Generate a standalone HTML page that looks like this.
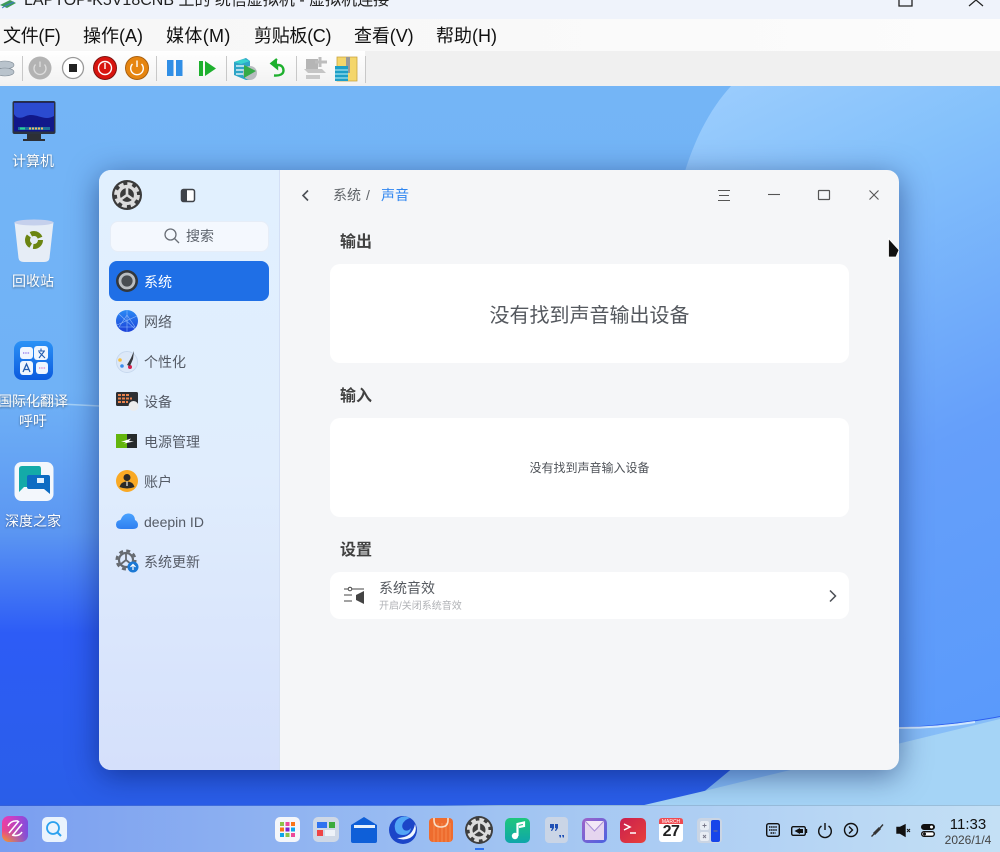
<!DOCTYPE html>
<html lang="zh"><head><meta charset="utf-8"><title>声音</title>
<style>
html,body{margin:0;padding:0;width:1000px;height:852px;overflow:hidden}
body{position:relative;font-family:"Liberation Sans","Noto Sans CJK SC",sans-serif;background:#5a9af5}
.a{position:absolute;white-space:nowrap}
svg{position:absolute;overflow:hidden}
.m{top:24px;font-size:18px;line-height:24px;color:#111}
.d{color:#fff;font-size:14px;line-height:20px;width:90px;left:-12px;text-align:center;text-shadow:0 1px 2px rgba(0,0,0,.45)}
.s{left:144px;font-size:14px;line-height:20px;color:#555b66}
.h{left:340px;font-size:16px;line-height:20px;font-weight:700;color:#414141}
.c{position:absolute;left:330px;width:519px;background:#fff;border-radius:10px}
</style></head><body>

<!-- wallpaper -->
<svg style="left:0;top:86px" width="1000" height="720" viewBox="0 86 1000 720">
<defs>
<linearGradient id="w" x1="0" y1="0" x2="0" y2="1"><stop offset="0" stop-color="#74b5f6"/><stop offset=".42" stop-color="#70b2f6"/><stop offset=".62" stop-color="#5b96f2"/><stop offset=".76" stop-color="#2d5cf6"/><stop offset="1" stop-color="#2a5ee8"/></linearGradient>
<linearGradient id="w2" gradientUnits="userSpaceOnUse" x1="700" y1="100" x2="1000" y2="720"><stop offset="0" stop-color="#9accfd"/><stop offset=".2" stop-color="#84c1fb"/><stop offset=".6" stop-color="#659ffa"/><stop offset="1" stop-color="#5a9afb"/></linearGradient>
</defs>
<rect x="0" y="86" width="1000" height="720" fill="url(#w)"/>
<path d="M731 86C700 120 680 170 670 240C660 400 680 640 899 727C930 726 970 722 1000 716V86Z" fill="url(#w2)"/>
<path d="M0 401L100 406" stroke="#a6d2f8" stroke-width="1.500" fill="none"/>
<path d="M780 729L899 728C930 727 970 723 1000 717V722L700 795Z" fill="#86bdf8"/>
<path d="M899 728C925 728 950 726 975 722" stroke="#cfe7fc" stroke-width="2" fill="none"/>
<path d="M640 806L700 792L1000 719V806Z" fill="#a5d4f6"/>
</svg>

<!-- host chrome -->
<div class="a" style="left:0;top:0;width:1000px;height:19px;background:#eff3fb;overflow:hidden">
 <div class="a" style="left:24px;top:-9px;font-size:16px;line-height:20px;color:#222">LAPTOP-K5V18CNB 上的 统信虚拟机 - 虚拟机连接</div>
 <svg style="left:0;top:0" width="18" height="10"><path d="M0 5L10 0L16 3L7 8Z" fill="#3d9a5a"/><path d="M2 8L7 5L14 2" stroke="#3f78c8" fill="none"/></svg>
 <svg style="left:895px;top:0" width="20" height="8"><path d="M4 0V6H17V0" fill="none" stroke="#222" stroke-width="1.300"/></svg>
 <svg style="left:965px;top:0" width="24" height="8"><path d="M4 6L11 0L18 6" fill="none" stroke="#222" stroke-width="1.200"/></svg>
</div>
<div class="a" style="left:0;top:19px;width:1000px;height:32px;background:linear-gradient(90deg,#f6f6f6,#fcfcfc)"></div>
<div class="a m" style="left:3px;letter-spacing:-.3px">文件(F)</div>
<div class="a m" style="left:83px">操作(A)</div>
<div class="a m" style="left:166px;letter-spacing:.35px">媒体(M)</div>
<div class="a m" style="left:254px;letter-spacing:-.3px">剪贴板(C)</div>
<div class="a m" style="left:354px;letter-spacing:-.1px">查看(V)</div>
<div class="a m" style="left:436px">帮助(H)</div>
<div class="a" style="left:0;top:51px;width:1000px;height:35px;background:#f0f0f0"></div>
<div class="a" style="left:0;top:51px;width:365px;height:33px;background:linear-gradient(#fff,#f2f2f2)"></div>
<svg style="left:0;top:51px" width="370" height="35">
 <g fill="#b9c3cc" stroke="#7f8a94" stroke-width=".6"><ellipse cx="5" cy="14" rx="9" ry="4"/><ellipse cx="5" cy="21" rx="9" ry="4"/></g>
 <g stroke="#c8c8c8"><path d="M22.500 5V30M156.500 5V30M226.500 5V30M296.500 5V30M365.500 5V32"/></g>
 <circle cx="40" cy="17" r="11.500" fill="#b3b3b3"/><path d="M35.500 13.500A6 6 0 1 0 44.500 13.500M40 10.500V16" stroke="#ddd" stroke-width="1.300" fill="none"/>
 <circle cx="73" cy="17" r="10.500" fill="#fff" stroke="#999" stroke-width="1.300"/><rect x="69" y="13" width="8" height="8" fill="#222"/>
 <circle cx="105" cy="17" r="11.500" fill="#d8140f" stroke="#7d1310"/><circle cx="105" cy="17" r="6.500" fill="none" stroke="#fff" stroke-width="1.400"/><path d="M105 12V18" stroke="#fff" stroke-width="1.400"/>
 <circle cx="137" cy="17" r="11.500" fill="#e68510" stroke="#a96010"/><path d="M132.500 13A6.300 6.300 0 1 0 141.500 13M137 9.500V16" stroke="#fff" stroke-width="1.400" fill="none"/>
 <rect x="167" y="9" width="6.500" height="16" fill="#318fe6"/><rect x="176" y="9" width="6.500" height="16" fill="#318fe6"/>
 <rect x="199" y="10" width="4" height="15" fill="#1eb02e"/><path d="M205 10L216 17.500L205 25Z" fill="#1eb02e"/>
 <path d="M234 11L246 7L250 10V29L246 29L234 24Z" fill="#2fa5c7"/><path d="M234 11L244 8L250 10L241 13Z" fill="#39d2cf"/><path d="M236 15H245M236 19H245M236 23H245" stroke="#fff" stroke-width="1.200"/><circle cx="250" cy="22" r="7" fill="#b8bcc0"/><path d="M244 14L256 20L244 27Z" fill="#35ab47"/>
 <path d="M277 8L271.500 12.500L277 17V14C282 13.500 283.500 17 283.500 19.500C283.500 23 280 25 274 24.500" fill="#1eb02e" stroke="#1eb02e" stroke-width="2.400" fill-opacity="0"/><path d="M277 8L271.500 12.500L277 17Z" fill="#1eb02e"/>
 <path d="M306 8H318V18H306Z" fill="#b5b5b5"/><path d="M304 18H322L326 22H308Z" fill="#c5c5c5"/><path d="M320 6V16M315 11H327" stroke="#bdbdbd" stroke-width="3"/><rect x="306" y="24" width="14" height="4" fill="#c9c9c9"/>
 <path d="M337 6H357V30H337Z" fill="#f4d66b" stroke="#c8a33f" stroke-width=".8"/><rect x="346" y="6" width="4" height="16" fill="#999"/><rect x="335" y="15" width="13" height="15" fill="#1d9fc7"/><path d="M335 19H348M335 23H348M335 27H348" stroke="#bff0f7"/>
</svg>

<!-- desktop icons -->
<svg style="left:10px;top:98px" width="48" height="48">
 <rect x="2.500" y="3" width="43" height="33" rx="2" fill="#2b3240"/><rect x="4" y="4.500" width="40" height="29" fill="#11188a"/><path d="M4 5H44V18C34 24 26 14 16 18C10 21 6 20 4 16Z" fill="#2b4bd0"/><rect x="8" y="29" width="32" height="3" fill="#1b6f9a"/><path d="M10 30.500H15" stroke="#2cd29b" stroke-width="2"/><path d="M19 30.500H34" stroke="#f3b56b" stroke-width="2" stroke-dasharray="2 1"/>
 <rect x="17" y="36" width="14" height="5" fill="#2c2f35"/><rect x="13" y="41" width="22" height="2" fill="#2c2f35"/>
</svg>
<svg style="left:10px;top:216px" width="48" height="48">
 <path d="M4.500 6H43.500L39.500 42Q39 46 34 46H14Q9 46 8.500 42Z" fill="#e6edf6"/><ellipse cx="24" cy="6.500" rx="19.500" ry="3" fill="#c5d0ec"/>
 <circle cx="24" cy="24" r="6.500" fill="none" stroke="#6b8512" stroke-width="5" stroke-dasharray="11 2.600"/>
</svg>
<svg style="left:10px;top:338px" width="48" height="48">
 <defs><linearGradient id="tr" x1="0" y1="0" x2="0" y2="1"><stop offset="0" stop-color="#2b92f6"/><stop offset="1" stop-color="#0b5ade"/></linearGradient></defs>
 <rect x="4" y="3" width="39" height="39" rx="8" fill="url(#tr)"/><rect x="10" y="9" width="13" height="12" rx="3" fill="#f0f6ff"/><rect x="24" y="8" width="14" height="14" rx="3" fill="#f0f6ff"/><rect x="10" y="23" width="13" height="14" rx="3" fill="#f0f6ff"/><rect x="26" y="24" width="12" height="12" rx="3" fill="#f0f6ff"/>
 <path d="M28 13H35M31 10.500V13M29 20L34 13.500M29 14L35 20" stroke="#225cb0" stroke-width="1.100" fill="none"/><path d="M13 34L16.500 26L20 34M14.500 31.500H18.500" stroke="#225cb0" stroke-width="1.300" fill="none"/><path d="M13 15H20" stroke="#8a6ee8" stroke-width="1.300" stroke-dasharray="1.300 1"/><path d="M29 30H36" stroke="#e07bc8" stroke-width="1.300" stroke-dasharray="1.300 1"/>
</svg>
<svg style="left:10px;top:458px" width="48" height="48">
 <rect x="4.500" y="4" width="39" height="39" rx="7" fill="#f3f7fc"/><path d="M9 11Q9 8 12 8H29Q31 8 31 11V27Q31 29 29 29H14L9 34Z" fill="#14aaa8"/><path d="M17 19Q17 17 19 17H38Q40 17 40 19V36L34 31H19Q17 31 17 29Z" fill="#0d6cc3"/><rect x="27" y="20" width="7" height="5" fill="#dff0ff"/>
</svg>
<div class="a d" style="top:151px">计算机</div>
<div class="a d" style="top:271px">回收站</div>
<div class="a d" style="top:391px">国际化翻译</div>
<div class="a d" style="top:411px">呼吁</div>
<div class="a d" style="top:511px">深度之家</div>

<!-- window -->
<div class="a" style="left:99px;top:170px;width:800px;height:600px;border-radius:12px;background:#f5f6f8;box-shadow:0 6px 30px rgba(0,20,80,.5);overflow:hidden">
 <div class="a" style="left:0;top:0;width:180px;height:600px;background:linear-gradient(#e1f0fe,#e0edfd 50%,#d5e0fb);border-right:1px solid #d3dff5"></div>
</div>

<!-- sidebar -->
<svg style="left:110px;top:178px" width="34" height="34" viewBox="0 0 34 34">
 <circle cx="17" cy="17" r="15" fill="#3b3b3b"/><circle cx="17" cy="17" r="8.500" fill="none" stroke="#dcdcdc" stroke-width="3.200"/><circle cx="17" cy="17" r="11.300" fill="none" stroke="#dcdcdc" stroke-width="3.200" stroke-dasharray="5 3.875"/><path d="M17 17V9M17 17L10 22M17 17L24 22" stroke="#dcdcdc" stroke-width="2.600"/>
</svg>
<svg style="left:180px;top:188px" width="16" height="15"><rect x="1.500" y="1.500" width="13" height="12" rx="2" fill="#fff" stroke="#3f4349" stroke-width="1.500"/><path d="M2 2H7V13H2Z" fill="#3f4349"/></svg>
<div class="a" style="left:110px;top:221px;width:157px;height:29px;border:1px solid #e6edf7;border-radius:8px;background:#f4f8fe"></div>
<svg style="left:163px;top:227px" width="18" height="18"><circle cx="7.500" cy="7.500" r="5.500" fill="none" stroke="#6a6f77" stroke-width="1.300"/><path d="M11.500 11.500L16 16" stroke="#6a6f77" stroke-width="1.300"/></svg>
<div class="a" style="left:186px;top:226px;font-size:14px;line-height:20px;color:#5d636c">搜索</div>
<div class="a" style="left:109px;top:261px;width:160px;height:40px;border-radius:8px;background:#1f6fe6"></div>

<svg style="left:115px;top:269px" width="24" height="24"><circle cx="12" cy="12" r="11" fill="#33373c"/><circle cx="12" cy="12" r="7" fill="#494d52" stroke="#b9bdc2" stroke-width="2.800"/></svg>
<svg style="left:115px;top:309px" width="24" height="24"><defs><linearGradient id="nt" x1="0" y1="0" x2="0" y2="1"><stop offset="0" stop-color="#2b8af5"/><stop offset="1" stop-color="#1b3fd8"/></linearGradient></defs><circle cx="12" cy="12" r="11" fill="url(#nt)"/><path d="M12 1V23M2 16L22 7M4 5L20 20M12 6L4 18L20 18Z" stroke="#8db8f9" stroke-width=".6" fill="none"/></svg>
<svg style="left:115px;top:349px" width="24" height="24"><circle cx="12" cy="13" r="10.500" fill="#dce8f8" stroke="#c7d8ee"/><circle cx="5" cy="11" r="1.800" fill="#f5c044"/><circle cx="7" cy="17" r="1.800" fill="#3a8dec"/><circle cx="15" cy="18" r="2" fill="#d8224f"/><path d="M19 2L16 9L12 16L15 17L18 10Z" fill="#37393e"/></svg>
<svg style="left:115px;top:389px" width="24" height="24"><rect x="1" y="3" width="22" height="14" rx="1.500" fill="#2d2f33"/><path d="M3 6H15M3 9.500H17M3 13H13" stroke="#e8824d" stroke-width="2" stroke-dasharray="3 1"/><circle cx="18.500" cy="17" r="5" fill="#ececec"/></svg>
<svg style="left:115px;top:429px" width="24" height="24"><rect x="1" y="5" width="11" height="14" fill="#63b50d"/><rect x="12" y="5" width="10" height="14" fill="#262a2b"/><path d="M6 13L16 9.500L14 12L19 12.500L9 14.500L11 13Z" fill="#fff"/></svg>
<svg style="left:115px;top:469px" width="24" height="24"><circle cx="12" cy="12" r="11" fill="#f9a925"/><circle cx="12" cy="8.500" r="3.500" fill="#2c2a28"/><path d="M4.500 18Q6 12.500 12 12.500Q18 12.500 19.500 18Q12 21 4.500 18Z" fill="#2c2a28"/><path d="M12 12.500V17" stroke="#eee" stroke-width="1.200"/></svg>
<svg style="left:115px;top:509px" width="24" height="24"><defs><linearGradient id="cl" x1="0" y1="0" x2="0" y2="1"><stop offset="0" stop-color="#4aa2ff"/><stop offset="1" stop-color="#2f7ff0"/></linearGradient></defs><path d="M6 20Q1 20 1 15.500Q1 11.500 5.500 11Q8 4 14 4.500Q19.500 5 20 11Q23 12.500 23 16Q23 20 18 20Z" fill="url(#cl)"/></svg>
<svg style="left:115px;top:549px" width="24" height="24"><circle cx="11" cy="11" r="7" fill="none" stroke="#666a70" stroke-width="2.200"/><circle cx="11" cy="11" r="9.300" fill="none" stroke="#666a70" stroke-width="2.500" stroke-dasharray="4 3.300"/><path d="M11 11V5M11 11L6 15M11 11L16 15" stroke="#666a70" stroke-width="1.800"/><circle cx="18" cy="18" r="5.500" fill="#1b78d4"/><path d="M18 21V16M15.500 18L18 15.500L20.500 18" stroke="#fff" stroke-width="1.200" fill="none"/></svg>

<div class="a s" style="top:272px;color:#fff">系统</div>
<div class="a s" style="top:312px">网络</div>
<div class="a s" style="top:352px">个性化</div>
<div class="a s" style="top:392px">设备</div>
<div class="a s" style="top:432px">电源管理</div>
<div class="a s" style="top:472px">账户</div>
<div class="a s" style="top:512px">deepin ID</div>
<div class="a s" style="top:552px">系统更新</div>

<!-- header -->
<svg style="left:300px;top:189px" width="12" height="13"><path d="M8 1.500L3 6.500L8 11.500" fill="none" stroke="#4b4f55" stroke-width="1.600"/></svg>
<div class="a" style="left:333px;top:186px;font-size:14px;line-height:18px;color:#5f6368">系统</div>
<div class="a" style="left:366px;top:186px;font-size:14px;line-height:18px;color:#5f6368">/</div>
<div class="a" style="left:381px;top:186px;font-size:14px;line-height:18px;color:#2f86f0">声音</div>
<svg style="left:710px;top:180px" width="180" height="30" fill="none" stroke="#555" stroke-width="1.100">
 <path d="M8 10.500H20M9 15.500H19M8 20.500H20"/><path d="M58 14.500H70"/><rect x="108.500" y="10.500" width="11" height="9" rx=".5" stroke-width="1.200"/><path d="M159.500 10.500L168.500 19.500M168.500 10.500L159.500 19.500"/>
</svg>

<!-- content -->
<div class="a h" style="top:233px">输出</div>
<div class="c" style="top:264px;height:99px"></div>
<div class="a" style="left:330px;width:519px;top:302px;text-align:center;font-size:20px;line-height:28px;color:#54585e">没有找到声音输出设备</div>
<div class="a h" style="top:387px">输入</div>
<div class="c" style="top:418px;height:99px"></div>
<div class="a" style="left:330px;width:519px;top:460px;text-align:center;font-size:12px;line-height:17px;color:#4f5359">没有找到声音输入设备</div>
<div class="a h" style="top:541px">设置</div>
<div class="c" style="top:572px;height:47px"></div>
<svg style="left:342px;top:586px" width="24" height="20"><path d="M2 3H6M10 3H22M2 9H10M2 15H10" stroke="#444" stroke-width="1.100" fill="none"/><circle cx="8" cy="3" r="1.800" fill="#fff" stroke="#444"/><path d="M14 9L22 5V18L14 14Z" fill="#444"/></svg>
<div class="a" style="left:379px;top:578px;font-size:14px;line-height:20px;color:#55595f">系统音效</div>
<div class="a" style="left:379px;top:600px;font-size:10px;line-height:14px;color:#b0b2b6">开启/关闭系统音效</div>
<svg style="left:827px;top:589px" width="12" height="14"><path d="M3 1.500L8.500 7L3 12.500" fill="none" stroke="#4b4f55" stroke-width="1.500"/></svg>

<!-- cursor -->
<svg style="left:886px;top:236px" width="16" height="23"><path d="M2.500 2.500L13 14L10 21H2.500Z" fill="#111" stroke="#fff" stroke-width=".8"/></svg>

<!-- dock -->
<div class="a" style="left:0;top:806px;width:1000px;height:46px;background:linear-gradient(90deg,#7a9ef0,#a0c3f2 50%,#c4e0f5)"></div>
<div class="a" style="left:0;top:805px;width:1000px;height:1px;background:linear-gradient(90deg,#3460d8,#4a7ae0 44%,#8fb3d8 50%,#9cc0da)"></div>
<svg style="left:0;top:805px" width="1000" height="47">
 <defs>
 <linearGradient id="g1" x1="0" y1="0" x2="0" y2="1"><stop offset="0" stop-color="#e93ab8"/><stop offset=".55" stop-color="#ef4488"/><stop offset="1" stop-color="#f9a01c"/></linearGradient>
 <linearGradient id="g2" x1="0" y1="0" x2="1" y2="0"><stop offset="0" stop-color="#a040e0" stop-opacity="0"/><stop offset="1" stop-color="#7a4fe0"/></linearGradient>
 <linearGradient id="g3" x1="0" y1="0" x2="0" y2="1"><stop offset="0" stop-color="#1fc77c"/><stop offset="1" stop-color="#0fa6aa"/></linearGradient>
 <linearGradient id="g4" x1="0" y1="0" x2="1" y2="1"><stop offset="0" stop-color="#a063c8"/><stop offset="1" stop-color="#4a62e0"/></linearGradient>
 <linearGradient id="g5" x1="0" y1="0" x2="1" y2="1"><stop offset="0" stop-color="#c91f4f"/><stop offset="1" stop-color="#e8403a"/></linearGradient>
 </defs>
 <rect x="2" y="11" width="26" height="26" rx="7" fill="url(#g1)"/><rect x="2" y="11" width="26" height="26" rx="7" fill="url(#g2)"/><path d="M9 28L19 16M13 30L22 19M8 21Q11 15 18 16M22 27Q19 32 12 30" stroke="#fff" stroke-width="1.500" fill="none"/>
 <rect x="42" y="12" width="25" height="25" rx="5" fill="#eaf3fd"/><circle cx="53" cy="23" r="6" fill="none" stroke="#2ba1ef" stroke-width="1.800"/><path d="M57 27L61 31" stroke="#2ba1ef" stroke-width="2"/>
 <rect x="275" y="12" width="25" height="25" rx="5" fill="#f4f6fa"/>
 <rect x="280" y="17" width="4" height="4" fill="#8bc34a"/><rect x="285.500" y="17" width="4" height="4" fill="#ec4899"/><rect x="291" y="17" width="4" height="4" fill="#f97316"/><rect x="280" y="22.500" width="4" height="4" fill="#f97316"/><rect x="285.500" y="22.500" width="4" height="4" fill="#7e22ce"/><rect x="291" y="22.500" width="4" height="4" fill="#0ea5e9"/><rect x="280" y="28" width="4" height="4" fill="#0ea5e9"/><rect x="285.500" y="28" width="4" height="4" fill="#8bc34a"/><rect x="291" y="28" width="4" height="4" fill="#ec4899"/>
 <rect x="313" y="12" width="26" height="25" rx="5" fill="#cfd8e6"/><rect x="317" y="17" width="10" height="6" fill="#2f72f0"/><rect x="329" y="17" width="6" height="6" fill="#3cab3c"/><rect x="317" y="25" width="6" height="6" fill="#ef4444"/><rect x="325" y="25" width="10" height="6" fill="#eef2f8"/>
 <path d="M351 20L364 12L377 20V36Q377 38 375 38H353Q351 38 351 36Z" fill="#0e5fd8"/><rect x="354" y="20" width="21" height="3" fill="#e6f0fb"/>
 <circle cx="403" cy="25" r="14" fill="#1c46c8"/><path d="M410 13A10 10 0 0 0 395 24Q396 30 403 30Q410 30 411 23Q408 27 404 25Q401 22 403 18Q406 14 410 13Z" fill="#52a6f6"/><path d="M415 19Q418 28 410 33Q403 36 397 33Q405 33 410 29Q414 25 415 19Z" fill="#f2f8ff"/>
 <rect x="429" y="13" width="24" height="24" rx="4" fill="#ee6c2e"/><path d="M434 18V37M438 18V37M442 18V37M446 18V37M450 18V37" stroke="#f58a4f" stroke-width="1"/><path d="M434 13V15Q434 22 441 22Q448 22 448 15V13" fill="none" stroke="#f8dfc8" stroke-width="1.600"/>
 <circle cx="479" cy="25" r="14" fill="#3e3e3e"/><circle cx="479" cy="25" r="8" fill="none" stroke="#dcdcdc" stroke-width="3"/><circle cx="479" cy="25" r="10.600" fill="none" stroke="#dcdcdc" stroke-width="3" stroke-dasharray="4.700 3.630"/><path d="M479 25V17M479 25L472 30M479 25L486 30" stroke="#dcdcdc" stroke-width="2.300"/>
 <rect x="475" y="43" width="9" height="2" fill="#2e72ef"/>
 <rect x="505" y="13" width="25" height="25" rx="5" fill="url(#g3)"/><path d="M517.500 31V19L524 17.500V21L519 22" fill="none" stroke="#fff" stroke-width="2.200"/><circle cx="515" cy="31" r="3.200" fill="#fff"/>
 <rect x="545" y="12" width="23" height="26" rx="4" fill="#cad5e6"/><path d="M550 19H554V23L552 26H551L552 23H550ZM555 19H558V23L556 26H555L556 23H555Z" fill="#1e4fb5"/><path d="M559 30H561V32L560 33ZM562 30H564V32L563 33Z" fill="#1e4fb5"/>
 <rect x="582" y="13" width="25" height="25" rx="5" fill="url(#g4)"/><rect x="585" y="16" width="19" height="19" fill="#e5d5ef"/><path d="M585 16L594.500 26L604 16" fill="#f3e9f7" stroke="#a98fd7"/>
 <rect x="620" y="13" width="26" height="25" rx="5" fill="url(#g5)"/><path d="M624 19L630 22L624 25" stroke="#fff" stroke-width="1.500" fill="none"/><path d="M630 28H636" stroke="#fff" stroke-width="1.500"/>
 <rect x="659" y="13" width="24" height="24" rx="3" fill="#fff"/><path d="M659 19V16Q659 13 662 13H680Q683 13 683 16V19Z" fill="#ef4a50"/>
 <text x="671" y="18" font-size="5" fill="#fff" text-anchor="middle" font-family="Liberation Sans, sans-serif">MARCH</text>
 <rect x="697" y="13" width="25" height="25" rx="4" fill="#cad5e4"/><rect x="700" y="16" width="9" height="9" rx="2" fill="#e8edf4"/><rect x="700" y="27" width="9" height="9" rx="2" fill="#e8edf4"/><rect x="711" y="15" width="9" height="22" rx="2" fill="#1745ea"/>
 <path d="M702.500 20.500H706.500M704.500 18.500V22.500M703 30L706 33M706 30L703 33M713.500 26H717.500" stroke="#778" stroke-width=".9" fill="none"/>
</svg>
<div class="a" style="left:659px;top:822px;width:24px;text-align:center;font-size:16px;line-height:20px;font-weight:700;color:#222;letter-spacing:-.5px">27</div>
<!-- tray -->
<svg style="left:760px;top:805px" width="185" height="47" fill="none" stroke="#111" stroke-width="1.400">
 <rect x="6.700" y="18.700" width="12.600" height="12.600" rx="2"/><path d="M9 22H17M9 25H17M10.500 28H15.500" stroke-width="1.500" stroke-dasharray="1.500 .6"/>
 <rect x="31.700" y="21.700" width="13.600" height="8.600" rx="1.500"/><path d="M46.500 24V28" /><path d="M34.500 26L40 23V29ZM40 24H43V28H40Z" fill="#111" stroke="none"/>
 <path d="M61.500 21A6.300 6.300 0 1 0 68.500 21M65 18V25"/>
 <circle cx="91" cy="25" r="6.500"/><path d="M89 21.500L92.500 25L89 28.500"/>
 <path d="M111.500 31.500L115 28M120 23L123 19.500" stroke="#333"/><path d="M114 29L120 23" stroke="#333" stroke-width="3"/>
 <path d="M137 22.500H140L145 20V31L140 28H137Z" fill="#111"/><path d="M147 24L150 27M150 24L147 27" stroke-width="1"/>
 <rect x="161.700" y="19.700" width="12.600" height="4.600" rx="2.300" fill="#111"/><circle cx="171.500" cy="22" r="1.500" fill="#fff" stroke="none"/><rect x="161.700" y="26.700" width="12.600" height="4.600" rx="2.300" fill="#fff"/><circle cx="164.500" cy="29" r="1.500" fill="#111" stroke="none"/>
</svg>
<div class="a" style="left:930px;top:815px;width:76px;text-align:center;font-size:15px;line-height:20px;color:#111">11:33</div>
<div class="a" style="left:930px;top:832px;width:76px;text-align:center;font-size:12px;line-height:16px;color:#444">2026/1/4</div>
</body></html>
